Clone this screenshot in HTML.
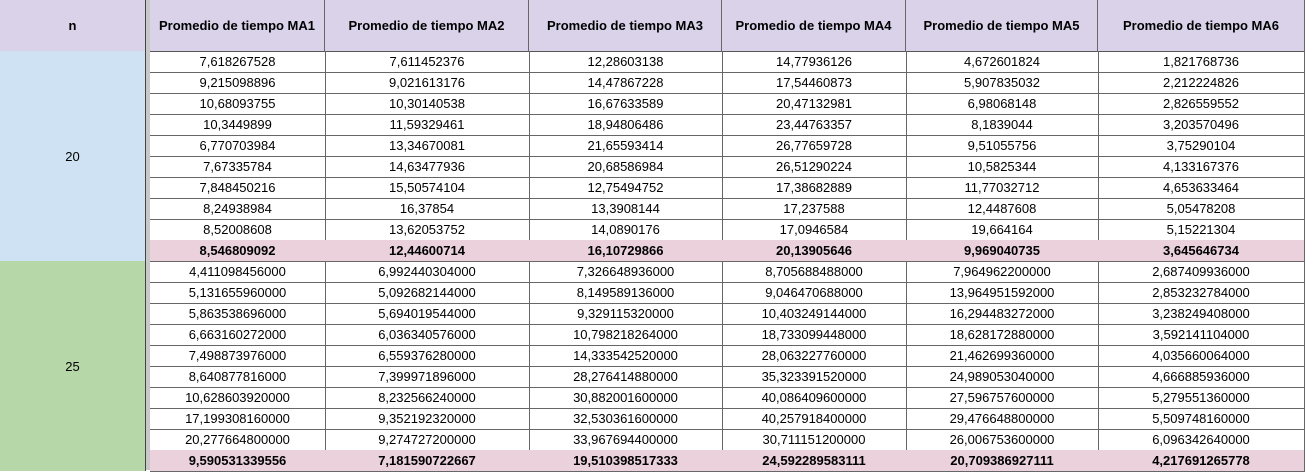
<!DOCTYPE html><html><head><style>
body{margin:0;width:1305px;height:470px;overflow:hidden;background:#fff;font-family:"Liberation Sans",sans-serif;font-size:13px;color:#000}
.c{position:absolute;display:flex;align-items:center;justify-content:center;box-sizing:border-box;border-right:1px solid #666;border-bottom:1px solid #666;white-space:nowrap}
.h{background:#d9d2e9;font-weight:bold;border-bottom:1px solid #555}
.b{background:#ead1dc;font-weight:bold}
</style></head><body>
<div id="g"></div>
<script>
const xs=[150,325,529,722,906,1098,1305];
const heads=["Promedio de tiempo MA1","Promedio de tiempo MA2","Promedio de tiempo MA3","Promedio de tiempo MA4","Promedio de tiempo MA5","Promedio de tiempo MA6"];
const rows=[
["7,618267528","7,611452376","12,28603138","14,77936126","4,672601824","1,821768736"],
["9,215098896","9,021613176","14,47867228","17,54460873","5,907835032","2,212224826"],
["10,68093755","10,30140538","16,67633589","20,47132981","6,98068148","2,826559552"],
["10,3449899","11,59329461","18,94806486","23,44763357","8,1839044","3,203570496"],
["6,770703984","13,34670081","21,65593414","26,77659728","9,51055756","3,75290104"],
["7,67335784","14,63477936","20,68586984","26,51290224","10,5825344","4,133167376"],
["7,848450216","15,50574104","12,75494752","17,38682889","11,77032712","4,653633464"],
["8,24938984","16,37854","13,3908144","17,237588","12,4487608","5,05478208"],
["8,52008608","13,62053752","14,0890176","17,0946584","19,664164","5,15221304"],
["8,546809092","12,44600714","16,10729866","20,13905646","9,969040735","3,645646734"],
["4,411098456000","6,992440304000","7,326648936000","8,705688488000","7,964962200000","2,687409936000"],
["5,131655960000","5,092682144000","8,149589136000","9,046470688000","13,964951592000","2,853232784000"],
["5,863538696000","5,694019544000","9,329115320000","10,403249144000","16,294483272000","3,238249408000"],
["6,663160272000","6,036340576000","10,798218264000","18,733099448000","18,628172880000","3,592141104000"],
["7,498873976000","6,559376280000","14,333542520000","28,063227760000","21,462699360000","4,035660064000"],
["8,640877816000","7,399971896000","28,276414880000","35,323391520000","24,989053040000","4,666885936000"],
["10,628603920000","8,232566240000","30,882001600000","40,086409600000","27,596757600000","5,279551360000"],
["17,199308160000","9,352192320000","32,530361600000","40,257918400000","29,476648800000","5,509748160000"],
["20,277664800000","9,274727200000","33,967694400000","30,711151200000","26,006753600000","6,096342640000"],
["9,590531339556","7,181590722667","19,510398517333","24,592289583111","20,709386927111","4,217691265778"]];
let h='';
const d=(x,y,w,hh,cls,t,st)=>h+=`<div class="c ${cls}" style="left:${x}px;top:${y}px;width:${w}px;height:${hh}px;${st||''}">${t}</div>`;
d(0,0,146,52,'h','n','border-right:1px solid #444');
d(146,0,4,470,'','', 'background:#c8c8c8;border:none');
for(let i=0;i<6;i++)d(xs[i],0,xs[i+1]-xs[i],52,'h',heads[i]);
d(0,51,146,211,'','20','background:#cfe2f3;border-bottom:1px solid #444;border-right:1px solid #444');
d(0,261,146,210,'','25','background:#b6d7a8;border-right:1px solid #444;border-bottom:none');
rows.forEach((r,k)=>{const y=51+21*k;const cls=(k==9||k==19)?'b':'';
for(let i=0;i<6;i++)d(xs[i],y,xs[i+1]-xs[i]+(i<5?1:0),22,cls,r[i]);});
document.getElementById('g').innerHTML=h;
</script>
</body></html>
